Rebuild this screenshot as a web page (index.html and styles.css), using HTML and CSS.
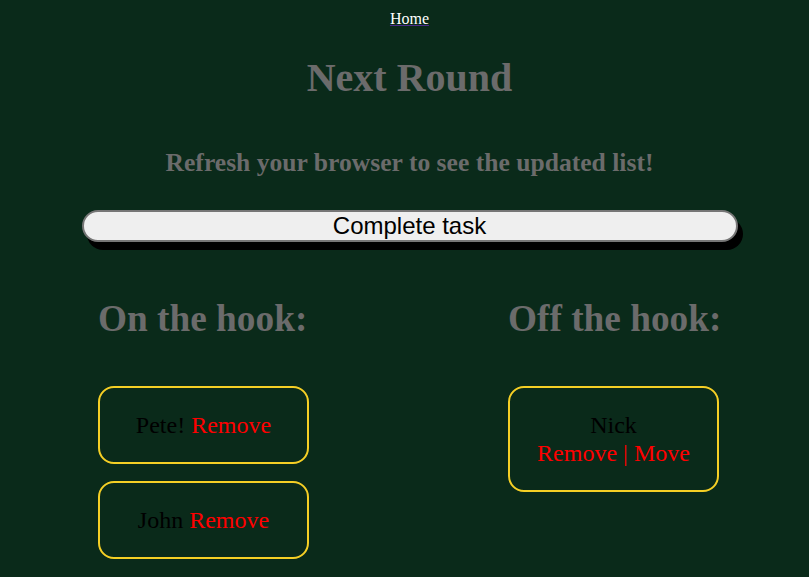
FILE: index.html
```html
<!DOCTYPE html>
<html>
<head>
<meta charset="utf-8">
<link rel="stylesheet" href="styles.css">
</head>
<body>
<nav class="nav"><a class="nav-link" href="#">Home</a></nav>
<h1 class="title">Next Round</h1>
<h2 class="subtitle">Refresh your browser to see the updated list!</h2>
<div class="action">
  <button class="complete-btn">Complete task</button>
</div>
<div class="columns">
  <section class="column column-left">
    <h2 class="column-title">On the hook:</h2>
    <div class="card"><span class="name">Pete!</span> <span class="link">Remove</span></div>
    <div class="card"><span class="name">John</span> <span class="link">Remove</span></div>
  </section>
  <section class="column column-right">
    <h2 class="column-title">Off the hook:</h2>
    <div class="card"><span class="name">Nick</span><br><span class="link">Remove | Move</span></div>
  </section>
</div>
</body>
</html>
```
FILE: styles.css
```css
html, body {
  background: #0a2a1a;
}
body {
  margin: 10px 8px 8px 18px;
  font-family: "Liberation Serif", "Times New Roman", serif;
  color: #000;
}
.nav {
  text-align: center;
  font-size: 16px;
  line-height: 18px;
}
.nav-link {
  color: #fff;
  text-decoration: underline;
  text-decoration-color: #4b2a8c;
}
.title {
  text-align: center;
  color: #6b6b6b;
  font-size: 40px;
  font-weight: bold;
  margin: 27px 0 0;
  line-height: 46px;
}
.subtitle {
  text-align: center;
  color: #6b6b6b;
  font-size: 25.6px;
  font-weight: bold;
  margin: 48px 0 0;
  line-height: 28px;
}
.action {
  display: flex;
  justify-content: center;
  margin-top: 33px;
}
.complete-btn {
  width: 656px;
  height: 32px;
  background: #efefef;
  border: 2px solid #767676;
  border-radius: 16px;
  box-shadow: 5px 8px 0 #000;
  font-family: "Liberation Sans", Arial, sans-serif;
  font-size: 24px;
  color: #000;
  padding: 0;
  line-height: 28px;
}
.columns {
  display: flex;
  margin-top: 56px;
}
.column {
  width: 211px;
  display: flex;
  flex-direction: column;
  gap: 17px;
}
.column-left {
  margin-left: 80px;
}
.column-right {
  margin-left: 199px;
}
.column-title {
  color: #6b6b6b;
  font-size: 37.3px;
  font-weight: bold;
  margin: 0 0 29px;
  line-height: 42px;
  white-space: nowrap;
  padding-left: 0;
}
.card {
  border: 2px solid #f5cf25;
  border-radius: 16px;
  padding: 23px 0;
  text-align: center;
  font-size: 24px;
  line-height: 28px;
}
.name {
  color: #000;
}
.link {
  color: #ff0000;
}
```
